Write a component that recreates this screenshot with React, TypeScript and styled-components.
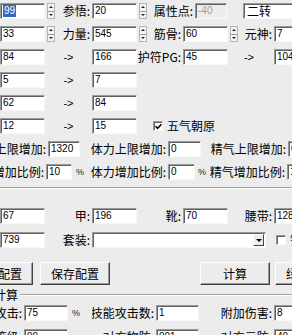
import React, { ReactElement } from "react";
import styled, { createGlobalStyle } from "styled-components";

const GlobalStyle = createGlobalStyle`
  html, body {
    margin: 0;
    padding: 0;
    background: #ececec;
  }
`;

function Spinner(): ReactElement {
  return (
    <Spin>
      <SpinArrow />
      <SpinArrow $down />
    </Spin>
  );
}

function Check({ checked }: { checked?: boolean }): ReactElement {
  return (
    <CheckBox>
      {checked && (
        <svg width="7" height="7" viewBox="0 0 7 7">
          <path d="M0.6 3.2 L2.6 5.3 L6.4 1.2" stroke="#000" strokeWidth="1.6" fill="none" />
        </svg>
      )}
    </CheckBox>
  );
}

function App(): ReactElement {
  return (
    <>
      <GlobalStyle />
      <Dialog>
        <Row>
          <Edit $w={45}>
            <Selected>99</Selected>
          </Edit>
          <Spinner />
          <Label $w={37}>参悟:</Label>
          <Edit $w={45}>20</Edit>
          <Spinner />
          <Label $w={48}>属性点:</Label>
          <Edit $w={32} $disabled>
            -40
          </Edit>
          <Gap $w={16} />
          <Edit $w={60} $cjk>
            二转
          </Edit>
        </Row>
        <Row $mt={7}>
          <Edit $w={45}>33</Edit>
          <Spinner />
          <Label $w={37}>力量:</Label>
          <Edit $w={45}>545</Edit>
          <Spinner />
          <Label $w={36}>筋骨:</Label>
          <Edit $w={45}>60</Edit>
          <Spinner />
          <Label $w={36}>元神:</Label>
          <Edit $w={30}>7</Edit>
        </Row>
        <Row $mt={7}>
          <Edit $w={45}>84</Edit>
          <Arrow $w={47}>-&gt;</Arrow>
          <Edit $w={45}>166</Edit>
          <Label $w={46}>护符PG:</Label>
          <Edit $w={45}>45</Edit>
          <Arrow $w={42}>-&gt;</Arrow>
          <Gap $w={4} />
          <Edit $w={30}>104</Edit>
        </Row>
        <Row $mt={7}>
          <Edit $w={45}>5</Edit>
          <Arrow $w={47}>-&gt;</Arrow>
          <Edit $w={45}>7</Edit>
        </Row>
        <Row $mt={7}>
          <Edit $w={45}>62</Edit>
          <Arrow $w={47}>-&gt;</Arrow>
          <Edit $w={45}>84</Edit>
        </Row>
        <Row $mt={7}>
          <Edit $w={45}>12</Edit>
          <Arrow $w={47}>-&gt;</Arrow>
          <Edit $w={45}>15</Edit>
          <Gap $w={16} />
          <Check checked />
          <CheckText>五气朝原</CheckText>
        </Row>
        <Row $mt={7}>
          <Label $w={48}>气血上限增加:</Label>
          <Edit $w={32}>1320</Edit>
          <Label $w={88}>体力上限增加:</Label>
          <Edit $w={33}>0</Edit>
          <Label $w={87}>精气上限增加:</Label>
          <Edit $w={30}>0</Edit>
        </Row>
        <Row $mt={7}>
          <Label $w={46}>气血增加比例:</Label>
          <Edit $w={26}>10</Edit>
          <Pct $w={19}>%</Pct>
          <Label $w={77}>体力增加比例:</Label>
          <Edit $w={27}>0</Edit>
          <Pct $w={13} $indent={3}>
            %
          </Pct>
          <Label $w={79}>精气增加比例:</Label>
          <Edit $w={30}>10</Edit>
        </Row>

        <Etched $mt={7} />

        <Row $mt={19}>
          <Edit $w={45}>67</Edit>
          <Label $w={47}>甲:</Label>
          <Edit $w={45}>196</Edit>
          <Label $w={46}>靴:</Label>
          <Edit $w={45}>70</Edit>
          <Label $w={46}>腰带:</Label>
          <Edit $w={30}>128</Edit>
        </Row>
        <Row $mt={8}>
          <Edit $w={45}>739</Edit>
          <Label $w={47}>套装:</Label>
          <Combo $w={174}>
            <DropButton />
          </Combo>
          <Gap $w={10} />
          <Check />
          <CheckText>锁定</CheckText>
        </Row>

        <ButtonRow>
          <Button>读取配置</Button>
          <Button>保存配置</Button>
          <Gap $w={76} />
          <Button>计算</Button>
          <Button $ml={5}>绿武计算</Button>
        </ButtonRow>

        <GroupHeader>
          <Legend>计算</Legend>
          <GroupLine />
        </GroupHeader>

        <Row $mt={3}>
          <Label $w={24}>物理攻击:</Label>
          <Edit $w={44}>75</Edit>
          <Pct $w={24}>%</Pct>
          <Label $w={64}>技能攻击数:</Label>
          <Edit $w={43}>1</Edit>
          <Label $w={75}>附加伤害:</Label>
          <Edit $w={30}>8</Edit>
        </Row>
        <Row $mt={8}>
          <Label $w={24}>人物等级:</Label>
          <Edit $w={44}>99</Edit>
          <Pct $w={24} />
          <Label $w={64}>对方物防:</Label>
          <Edit $w={43}>901</Edit>
          <Label $w={75}>对方元防:</Label>
          <Edit $w={30}>40</Edit>
        </Row>
      </Dialog>
    </>
  );
}

const Dialog = styled.div`
  width: 292px;
  height: 335px;
  overflow: hidden;
  box-sizing: border-box;
  padding-top: 3px;
  background: #ececec;
  color: #000;
  font-family: "Noto Sans CJK SC", "Liberation Sans", sans-serif;
  font-size: 12px;
  display: flex;
  flex-direction: column;
`;

const Row = styled.div<{ $mt?: number }>`
  flex: none;
  display: flex;
  align-items: center;
  height: 16px;
  margin-top: ${(p) => p.$mt ?? 0}px;
  white-space: nowrap;

  & > * {
    flex: none;
  }
`;

const Edit = styled.div<{ $w: number; $disabled?: boolean; $cjk?: boolean }>`
  width: ${(p) => p.$w}px;
  height: 16px;
  box-sizing: border-box;
  padding-left: ${(p) => (p.$cjk ? 3 : 2)}px;
  border: 1px solid;
  border-color: #9a9a9a #f8f8f8 #f8f8f8 #9a9a9a;
  box-shadow: inset 1px 1px 0 #606060;
  background: ${(p) => (p.$disabled ? "#ececec" : "#fff")};
  color: ${(p) => (p.$disabled ? "#9c9c9c" : "#000")};
  font-family: ${(p) =>
    p.$cjk ? `"Noto Sans CJK SC", sans-serif` : `"Liberation Sans", sans-serif`};
  font-size: ${(p) => (p.$cjk ? 12 : 10)}px;
  line-height: 14px;
  overflow: hidden;
  white-space: nowrap;
`;

const Selected = styled.span`
  display: inline-block;
  padding: 0 1px;
  line-height: 12px;
  margin-top: 1px;
  background: #3169c6;
  color: #fff;
`;

const Spin = styled.div`
  margin-left: 2px;
  width: 8px;
  height: 16px;
  box-sizing: border-box;
  display: flex;
  flex-direction: column;
  border: 1px solid #b4b4b4;
  background: #f4f4f4;
`;

const SpinArrow = styled.div<{ $down?: boolean }>`
  flex: 1;
  display: flex;
  align-items: center;
  justify-content: center;
  border-top: ${(p) => (p.$down ? "1px solid #9a9a9a" : "none")};

  &::after {
    content: "";
    border-left: 2px solid transparent;
    border-right: 2px solid transparent;
    border-${(p) => (p.$down ? "top" : "bottom")}: 2px solid #222;
  }
`;

const Label = styled.div<{ $w: number }>`
  width: ${(p) => p.$w}px;
  box-sizing: border-box;
  display: flex;
  justify-content: flex-end;
  overflow: hidden;
  padding-right: 2px;
  line-height: 16px;
  white-space: nowrap;
`;

const Arrow = styled.div<{ $w: number }>`
  width: ${(p) => p.$w}px;
  text-align: center;
  font: 11px/16px "Liberation Sans", sans-serif;
`;

const Pct = styled.div<{ $w: number; $indent?: number }>`
  width: ${(p) => p.$w}px;
  box-sizing: border-box;
  padding-left: ${(p) => p.$indent ?? 4}px;
  font: 9px/16px "Liberation Sans", sans-serif;
  color: #222;
`;

const Gap = styled.div<{ $w: number }>`
  width: ${(p) => p.$w}px;
  height: 1px;
`;

const CheckBox = styled.div`
  width: 10px;
  height: 10px;
  box-sizing: border-box;
  display: flex;
  align-items: center;
  justify-content: center;
  background: #fff;
  border: 1px solid;
  border-color: #9a9a9a #f8f8f8 #f8f8f8 #9a9a9a;
  box-shadow: inset 1px 1px 0 #606060;
`;

const CheckText = styled.span`
  margin-left: 4px;
  font-size: 12px;
  line-height: 16px;
`;

const Etched = styled.div<{ $mt: number }>`
  flex: none;
  height: 0;
  margin-top: ${(p) => p.$mt}px;
  border-top: 1px solid #a0a0a0;
  border-bottom: 1px solid #fff;
`;

const Combo = styled.div<{ $w: number }>`
  width: ${(p) => p.$w}px;
  height: 16px;
  box-sizing: border-box;
  padding: 1px;
  display: flex;
  justify-content: flex-end;
  background: #fff;
  border: 1px solid;
  border-color: #9a9a9a #f8f8f8 #f8f8f8 #9a9a9a;
  box-shadow: inset 1px 1px 0 #606060;
`;

const DropButton = styled.div`
  width: 11px;
  height: 100%;
  box-sizing: border-box;
  display: flex;
  align-items: center;
  justify-content: center;
  background: #ececec;
  border: 1px solid;
  border-color: #fff #404040 #404040 #fff;

  &::after {
    content: "";
    border-left: 3px solid transparent;
    border-right: 3px solid transparent;
    border-top: 3px solid #000;
  }
`;

const ButtonRow = styled.div`
  flex: none;
  display: flex;
  gap: 7px;
  margin: 14px 0 0 -37px;
  white-space: nowrap;

  & > * {
    flex: none;
  }
`;

const Button = styled.button<{ $ml?: number }>`
  width: 70px;
  height: 23px;
  margin: 0 0 0 ${(p) => (p.$ml !== undefined ? p.$ml - 7 : 0)}px;
  padding: 0;
  box-sizing: border-box;
  display: flex;
  align-items: center;
  justify-content: center;
  background: #ececec;
  color: #000;
  font-family: "Noto Sans CJK SC", sans-serif;
  font-size: 12px;
  border: 1px solid;
  border-color: #fff #404040 #404040 #fff;
  box-shadow: inset -1px -1px 0 #9a9a9a;
`;

const GroupHeader = styled.div`
  flex: none;
  display: flex;
  align-items: center;
  height: 14px;
  margin: 3px 0 0 -6px;
`;

const Legend = styled.span`
  padding-right: 2px;
  line-height: 14px;
`;

const GroupLine = styled.div`
  flex: 1;
  height: 0;
  border-top: 1px solid #a0a0a0;
  border-bottom: 1px solid #fff;
`;

export default App;
